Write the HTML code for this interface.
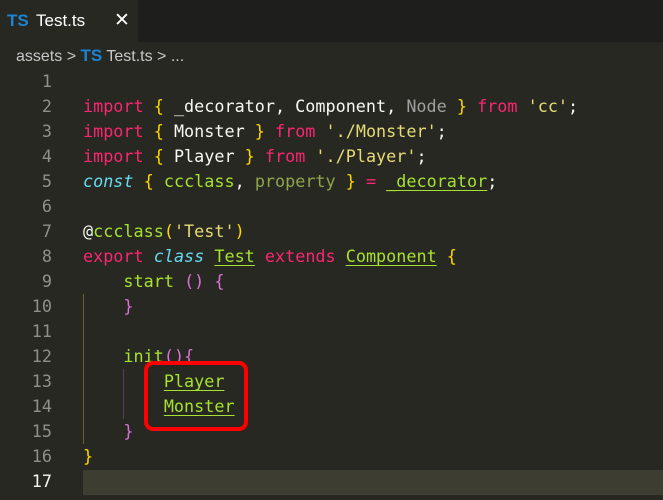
<!DOCTYPE html>
<html><head><style>
*{margin:0;padding:0;box-sizing:border-box}
body{width:663px;height:500px;background:#272822;overflow:hidden;position:relative;font-family:"Liberation Sans",sans-serif}
.tabbar{position:absolute;left:0;top:0;width:663px;height:42px;background:#1e1f1c}
.tab{position:absolute;left:0;top:0;width:138px;height:42px;background:#272822;color:#fff;font-size:17px}
.ts{color:#1a84d3;font-weight:bold}
.bc{position:absolute;left:16px;top:46px;font-size:16px;color:#c8c8c8}
.ln{position:absolute;left:0;width:52px;text-align:right;color:#8f908a;font-family:"DejaVu Sans Mono",monospace;font-size:16.8px;line-height:25px}
.code{position:absolute;left:83px;white-space:pre;font-family:"DejaVu Sans Mono",monospace;font-size:16.8px;line-height:25px;color:#f8f8f2}
.k{color:#f92672}.y{color:#ffd700}.s{color:#e6db74}.g{color:#a6e22e}.gr{color:#a0a0a0}.c{color:#66d9ef;font-style:italic}.p{color:#8fa54a}.pu{color:#da70d6}
.u{text-decoration:underline;text-decoration-color:#a6e22e;text-underline-offset:3px}
</style></head><body>
<div class="tabbar"><div class="tab"><span class="ts" style="position:absolute;left:7px;top:11px">TS</span><span style="position:absolute;left:36px;top:11px">Test.ts</span><span style="position:absolute;left:114px;top:9px;font-size:19px">✕</span></div></div>
<div class="bc">assets &gt; <span class="ts" style="font-size:17px">TS</span> Test.ts &gt; ...</div>
<div style="position:absolute;left:83px;top:470px;width:580px;height:25px;background:#3e3d32"></div>
<div style="position:absolute;left:83px;top:294px;width:1px;height:150px;background:#6b6133"></div>
<div style="position:absolute;left:123px;top:369px;width:1px;height:50px;background:#5a3d5a"></div>
<div class="ln" style="top:69px">1<br>2<br>3<br>4<br>5<br>6<br>7<br>8<br>9<br>10<br>11<br>12<br>13<br>14<br>15<br>16<br><span style="color:#f8f8f2">17</span></div>
<div class="code" style="top:69px">
<span class="k">import</span> <span class="y">{</span> _decorator, Component, <span class="gr">Node</span> <span class="y">}</span> <span class="k">from</span> <span class="s">'cc'</span>;
<span class="k">import</span> <span class="y">{</span> Monster <span class="y">}</span> <span class="k">from</span> <span class="s">'./Monster'</span>;
<span class="k">import</span> <span class="y">{</span> Player <span class="y">}</span> <span class="k">from</span> <span class="s">'./Player'</span>;
<span class="c">const</span> <span class="y">{</span> <span class="g">ccclass</span>, <span class="p">property</span> <span class="y">}</span> <span class="k">=</span> <span class="g u">_decorator</span>;

@<span class="g">ccclass</span><span class="y">(</span><span class="s">'Test'</span><span class="y">)</span>
<span class="k">export</span> <span class="c">class</span> <span class="g u">Test</span> <span class="k">extends</span> <span class="g u">Component</span> <span class="y">{</span>
    <span class="g">start</span> <span class="pu">()</span> <span class="pu">{</span>
    <span class="pu">}</span>

    <span class="g">init</span><span class="pu">(){</span>
        <span class="g u">Player</span>
        <span class="g u">Monster</span>
    <span class="pu">}</span>
<span class="y">}</span>
</div>
<div style="position:absolute;left:144px;top:361px;width:104px;height:70px;border:4px solid #f00;border-radius:9px"></div>
</body></html>
